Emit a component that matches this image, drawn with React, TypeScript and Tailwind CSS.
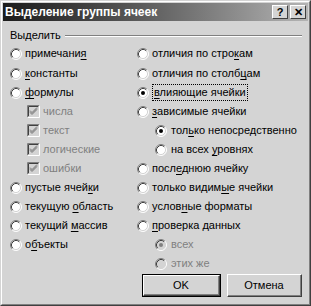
import React from 'react';

const Radio = ({ checked = false, disabled = false }: { checked?: boolean; disabled?: boolean }) => (
  <svg width="12" height="12" viewBox="0 0 12 12" className="shrink-0">
    <circle cx="6" cy="6" r="5" fill={disabled ? '#d4d4d4' : '#ffffff'} />
    <path d="M2.11 9.89 A5.5 5.5 0 0 1 9.89 2.11" fill="none" stroke="#808080" strokeWidth="1" />
    <path d="M2.82 9.18 A4.5 4.5 0 0 1 9.18 2.82" fill="none" stroke="#404040" strokeWidth="1" />
    <path d="M9.89 2.11 A5.5 5.5 0 0 1 2.11 9.89" fill="none" stroke="#ffffff" strokeWidth="1" />
    <path d="M9.18 2.82 A4.5 4.5 0 0 1 2.82 9.18" fill="none" stroke="#d4d4d4" strokeWidth="1" />
    {checked && <circle cx="6" cy="6" r="2" fill={disabled ? '#808080' : '#000000'} />}
  </svg>
);

const Check = () => (
  <svg width="13" height="13" viewBox="0 0 13 13" className="shrink-0">
    <rect x="0" y="0" width="13" height="13" fill="#d4d4d4" />
    <path d="M0.5 12.5 V0.5 H12.5" fill="none" stroke="#808080" />
    <path d="M1.5 11.5 V1.5 H11.5" fill="none" stroke="#404040" />
    <path d="M0.5 12.5 H12.5 V0.5" fill="none" stroke="#ffffff" />
    <path d="M1.5 11.5 H11.5 V1.5" fill="none" stroke="#d4d4d4" />
    <path d="M3 5.5 L5 7.5 L10 2.5 M3 6.5 L5 8.5 L10 3.5 M3 7.5 L5 9.5 L10 4.5" fill="none" stroke="#808080" />
  </svg>
);

// label with one underlined access letter
const L = ({ t, u }: { t: string; u?: number }) =>
  u === undefined ? (
    <span>{t}</span>
  ) : (
    <span>
      {t.slice(0, u)}
      <span className="underline underline-offset-2">{t[u]}</span>
      {t.slice(u + 1)}
    </span>
  );

const Row = ({
  children,
  indent,
  disabled = false,
  first = false,
}: {
  children: React.ReactNode;
  indent?: 'check' | 'radio';
  disabled?: boolean;
  first?: boolean;
}) => (
  <div
    className={`flex h-[19px] items-center gap-[3px] whitespace-nowrap ${
      indent === 'check' ? 'pl-[17px]' : indent === 'radio' ? 'pl-[18px] gap-[4px]' : ''
    } ${first ? 'mb-[1px]' : ''} ${disabled ? 'text-[#808080]' : 'text-black'}`}
  >
    {children}
  </div>
);

const Button = ({ label, isDefault = false }: { label: string; isDefault?: boolean }) => (
  <div className={isDefault ? 'border border-black' : ''}>
    <div className="border-t border-l border-white border-r border-b border-r-[#404040] border-b-[#404040]">
      <div
        className={`flex items-center justify-center border-r border-b border-r-[#808080] border-b-[#808080] ${
          isDefault ? 'h-[19px] w-[75px]' : 'h-[21px] w-[73px]'
        }`}
      >
        {label}
      </div>
    </div>
  </div>
);

export default function App() {
  return (
    <div
      className="h-[306px] w-[311px] bg-[#d4d4d4] text-[11px] leading-none"
      style={{ fontFamily: '"Liberation Sans", Arial, sans-serif' }}
    >
      <div className="h-full w-full border-t border-l border-r border-b border-t-[#d4d4d4] border-l-[#d4d4d4] border-r-[#404040] border-b-[#404040]">
        <div className="h-full w-full border-t border-l border-r border-b border-t-white border-l-white border-r-[#808080] border-b-[#808080] p-[1px]">
          {/* title bar */}
          <div className="flex h-[18px] items-center justify-between bg-gradient-to-r from-[#1c1c1c] to-[#b4b4b4] pr-[2px] pl-[2px]">
            <span className="text-[12px] font-bold text-white">Выделение группы ячеек</span>
            <div className="flex gap-[2px]">
              {['?', '✕'].map((c) => (
                <div
                  key={c}
                  className="flex h-[14px] w-[16px] items-center justify-center border-t border-l border-r border-b border-t-white border-l-white border-r-[#404040] border-b-[#404040] bg-[#d4d4d4] text-[11px] font-bold text-black"
                >
                  {c}
                </div>
              ))}
            </div>
          </div>

          {/* group */}
          <div className="pt-[9px] pr-[6px] pl-[7px]">
            <div className="flex items-center gap-[4px]">
              <span>Выделить</span>
              <div className="flex-1 border-t border-b border-t-[#808080] border-b-white" />
            </div>

            <div className="mt-[3px] grid grid-cols-[127px_1fr]">
              <div className="flex flex-col">
                <Row first><Radio /><L t="примечания" u={9} /></Row>
                <Row><Radio /><L t="константы" u={0} /></Row>
                <Row><Radio /><L t="формулы" u={0} /></Row>
                <Row indent="check" disabled><Check /><span>числа</span></Row>
                <Row indent="check" disabled><Check /><span>текст</span></Row>
                <Row indent="check" disabled><Check /><span>логические</span></Row>
                <Row indent="check" disabled><Check /><span>ошибки</span></Row>
                <Row><Radio /><L t="пустые ячейки" u={11} /></Row>
                <Row><Radio /><L t="текущую область" u={8} /></Row>
                <Row><Radio /><L t="текущий массив" u={8} /></Row>
                <Row><Radio /><L t="объекты" u={1} /></Row>
              </div>
              <div className="flex flex-col">
                <Row first><Radio /><L t="отличия по строкам" u={15} /></Row>
                <Row><Radio /><L t="отличия по столбцам" u={16} /></Row>
                <Row>
                  <Radio checked />
                  <span className="border border-dotted border-black px-[1px] py-[2px]">
                    <L t="влияющие ячейки" u={0} />
                  </span>
                </Row>
                <Row><Radio /><L t="зависимые ячейки" u={0} /></Row>
                <Row indent="radio"><Radio checked /><L t="только непосредственно" u={3} /></Row>
                <Row indent="radio"><Radio /><L t="на всех уровнях" u={8} /></Row>
                <Row><Radio /><L t="последнюю ячейку" u={4} /></Row>
                <Row><Radio /><L t="только видимые ячейки" u={12} /></Row>
                <Row><Radio /><L t="условные форматы" u={5} /></Row>
                <Row><Radio /><L t="проверка данных" u={0} /></Row>
                <Row indent="radio" disabled><Radio checked disabled /><span>всех</span></Row>
                <Row indent="radio" disabled><Radio disabled /><span>этих же</span></Row>
              </div>
            </div>

            <div className="mt-[1px] flex justify-end gap-[6px]">
              <Button label="OK" isDefault />
              <Button label="Отмена" />
            </div>
          </div>
        </div>
      </div>
    </div>
  );
}
